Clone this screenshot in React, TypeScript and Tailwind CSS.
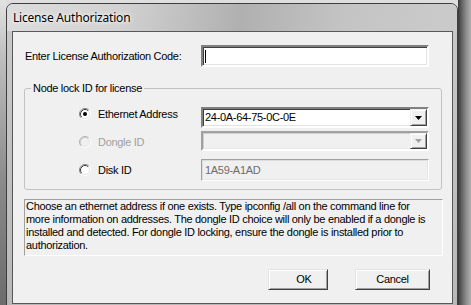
import React from 'react'

function Radio({ checked, disabled }: { checked?: boolean; disabled?: boolean }) {
  return (
    <svg width="12" height="12" viewBox="0 0 12 12" className="shrink-0">
      <circle cx="6" cy="6" r="5" fill={disabled ? '#f0f0f0' : '#ffffff'} />
      <path d="M2.11 9.89 A5.5 5.5 0 0 1 9.89 2.11" fill="none" stroke={disabled ? '#b0b0b0' : '#808080'} strokeWidth="1" />
      <path d="M2.82 9.18 A4.5 4.5 0 0 1 9.18 2.82" fill="none" stroke={disabled ? '#c8c8c8' : '#404040'} strokeWidth="1" />
      <path d="M9.89 2.11 A5.5 5.5 0 0 1 2.11 9.89" fill="none" stroke="#ffffff" strokeWidth="1" />
      <path d="M9.18 2.82 A4.5 4.5 0 0 1 2.82 9.18" fill="none" stroke="#e3e3e3" strokeWidth="1" />
      {checked && <circle cx="6" cy="6" r="2" fill={disabled ? '#a0a0a0' : '#000000'} />}
    </svg>
  )
}

function DropButton({ disabled }: { disabled?: boolean }) {
  return (
    <div className="w-[17px] h-full bg-[#f0f0f0] border border-t-[#f0f0f0] border-l-[#f0f0f0] border-b-[#404040] border-r-[#404040] shadow-[inset_1px_1px_0_#ffffff,inset_-1px_-1px_0_#a0a0a0] flex items-center justify-center">
      <svg width="7" height="4" viewBox="0 0 7 4">
        <path d="M0 0 H7 L3.5 4 Z" fill={disabled ? '#a0a0a0' : '#000000'} />
      </svg>
    </div>
  )
}

export default function App() {
  return (
    <div className="w-[471px] h-[305px] overflow-hidden flex bg-[#dedede] font-['Liberation_Sans',Arial,sans-serif] text-[11px] tracking-[-0.3px] text-black">
      {/* left backdrop */}
      <div className="w-[6px] shrink-0 bg-[linear-gradient(to_bottom,#e2e2e2_0%,#bdbdbd_20%,#8a8a8a_60%,#6c6c6c_100%)]" />

      {/* window */}
      <div className="w-[452px] shrink-0 mt-[3px] h-[310px] flex flex-col rounded-t-[7px] border border-[#3e3e3e] bg-[#c4c4c4] overflow-hidden">
        <div className="h-[27px] shrink-0 flex items-center pl-[6px] bg-[linear-gradient(100deg,#dcdcdc_0%,#d2d2d2_25%,#b0b0b0_52%,#c4c4c4_75%,#cbcbcb_100%)]">
          <span className="font-['Noto_Sans',sans-serif] text-[12px] tracking-[-0.2px] [text-shadow:0_0_6px_#ffffff,0_0_3px_#ffffff]">
            License Authorization
          </span>
        </div>

        <div className="flex-1 pl-[5px] pr-[4px] bg-[linear-gradient(to_bottom,#c8c8c8,#b8b8b8)]">
          {/* client area */}
          <div className="h-[273px] border border-[#585858] bg-[#f0f0f0] flex flex-col">
            {/* code row */}
            <div className="mt-[13px] h-[22px] flex items-center">
              <div className="ml-[12px] w-[176px]">Enter License Authorization Code:</div>
              <div className="w-[228px] h-[22px] bg-white border-2 border-t-[#808080] border-l-[#808080] border-b-white border-r-white shadow-[inset_1px_1px_0_#404040,inset_-1px_-1px_0_#e3e3e3] flex items-center">
                <div className="ml-[2px] w-[1px] h-[13px] bg-black" />
              </div>
            </div>

            {/* group box */}
            <fieldset className="mt-[15px] ml-[11px] w-[418px] h-[108px] border border-[#c2c2c2] rounded-[3px] flex flex-col">
              <legend className="ml-[6px] px-[2px] leading-[13px]">Node lock ID for license</legend>

              <div className="mt-[12px] h-[21px] flex items-start">
                <div className="ml-[54px] w-[122px] mt-[1px] h-[12px] flex items-center gap-[7px]">
                  <Radio checked />
                  <span>Ethernet Address</span>
                </div>
                <div className="w-[228px] h-[21px] bg-white border-2 border-t-[#808080] border-l-[#808080] border-b-white border-r-white shadow-[inset_1px_1px_0_#404040,inset_-1px_-1px_0_#e3e3e3] flex items-stretch">
                  <div className="flex-1 flex items-center pl-[2px]">24-0A-64-75-0C-0E</div>
                  <DropButton />
                </div>
              </div>

              <div className="mt-[3px] h-[20px] flex items-start">
                <div className="ml-[54px] w-[122px] mt-[5px] h-[12px] flex items-center gap-[7px] text-[#a0a0a0]">
                  <Radio disabled />
                  <span>Dongle ID</span>
                </div>
                <div className="w-[228px] h-[20px] bg-[#f0f0f0] border-2 border-t-[#a0a0a0] border-l-[#a0a0a0] border-b-white border-r-white shadow-[inset_1px_1px_0_#cfcfcf,inset_-1px_-1px_0_#e9e9e9] flex items-stretch justify-end">
                  <DropButton disabled />
                </div>
              </div>

              <div className="mt-[8px] h-[22px] flex items-start">
                <div className="ml-[54px] w-[122px] mt-[5px] h-[12px] flex items-center gap-[7px]">
                  <Radio />
                  <span>Disk ID</span>
                </div>
                <div className="w-[228px] h-[22px] bg-[#f0f0f0] border border-t-[#a0a0a0] border-l-[#a0a0a0] border-b-[#ffffff] border-r-[#ffffff] shadow-[inset_1px_1px_0_#dcdcdc,inset_-1px_-1px_0_#e6e6e6] flex items-center pl-[3px] text-[#6d6d6d]">
                  1A59-A1AD
                </div>
              </div>
            </fieldset>

            {/* info text */}
            <div className="mt-[9px] ml-[11px] w-[419px] h-[57px] border border-t-[#a0a0a0] border-l-[#a0a0a0] border-b-white border-r-white pl-[1px] leading-[13px]">
              Choose an ethernet address if one exists. Type ipconfig /all on the command line for
              <br />
              more information on addresses. The dongle ID choice will only be enabled if a dongle is
              <br />
              installed and detected. For dongle ID locking, ensure the dongle is installed prior to
              <br />
              authorization.
            </div>

            {/* buttons */}
            <div className="mt-[13px] ml-[255px] flex gap-[27px]">
              <button className="w-[60px] h-[21px] pl-[12px] bg-[#f0f0f0] border border-t-[#e3e3e3] border-l-[#e3e3e3] border-b-[#404040] border-r-[#404040] shadow-[inset_1px_1px_0_#ffffff,inset_-1px_-1px_0_#a0a0a0]">
                OK
              </button>
              <button className="w-[75px] h-[21px] bg-[#f0f0f0] border border-t-[#e3e3e3] border-l-[#e3e3e3] border-b-[#404040] border-r-[#404040] shadow-[inset_1px_1px_0_#ffffff,inset_-1px_-1px_0_#a0a0a0]">
                Cancel
              </button>
            </div>
          </div>
        </div>
      </div>

      {/* right shadow */}
      <div className="flex-1 bg-[linear-gradient(to_right,#3a3a3a_0%,#6a6a6a_35%,#9a9a9a_75%,#adadad_100%)]" />
    </div>
  )
}
